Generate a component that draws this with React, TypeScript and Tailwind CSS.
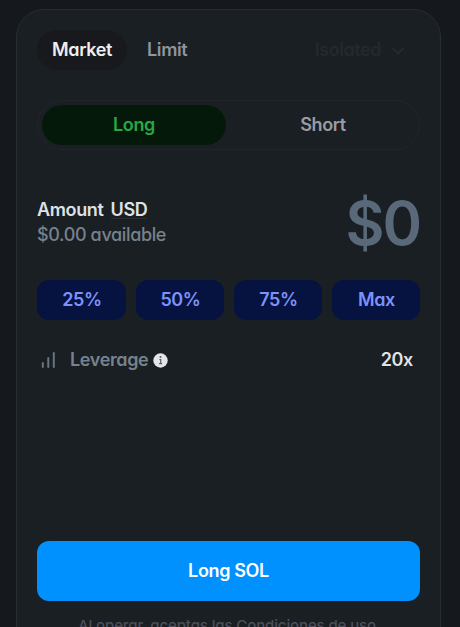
import { ReactNode } from "react";

function Percent({ children }: { children: ReactNode }) {
  return (
    <button className="h-10 rounded-xl bg-[#06123f] pl-px text-lg font-semibold tracking-[-0.36px] text-[#7c92fb]">
      {children}
    </button>
  );
}

export default function App() {
  return (
    <main className="h-[627px] w-[460px] overflow-hidden bg-[#15181c] pt-[9px] pl-4 font-['Inter',sans-serif] text-lg leading-6 font-semibold tracking-[-0.36px] [font-feature-settings:'cv11']">
      <section className="flex h-[660px] w-[425px] flex-col rounded-t-[28px] border border-[#292d33] bg-[#1a1f23] px-5 pt-5">
        <header className="flex h-10 items-center">
          <button className="h-10 w-[90px] rounded-full bg-[#18191c] text-[#eeeeee]">Market</button>
          <button className="ml-5 text-[#8f949f]">Limit</button>
          <button className="mr-[15px] ml-auto flex items-center gap-[10px] text-[#25282d]">
            <span className="tracking-[-0.45px]">Isolated</span>
            <svg width="14" height="14" viewBox="0 0 14 14" fill="none" stroke="currentColor" strokeWidth="2.3">
              <path d="m1.2 5 5.8 5.4L12.8 5" />
            </svg>
          </button>
        </header>

        <div className="mt-[30px] flex h-[50px] rounded-full border border-[#222428] p-1">
          <button className="w-[184px] rounded-full bg-[#05190b] text-[#27a844]">Long</button>
          <button className="flex-1 pl-[5px] text-[#9a9ca5]">Short</button>
        </div>

        <div className="mt-[42px] flex h-[64px] justify-between">
          <div className="pt-[5px] leading-[25px]">
            <div className="flex h-[25px] gap-[7px] text-[#dee2e6]">
              <span>Amount</span>
              <span className="h-[22px] border-b border-[#2b2f34]">USD</span>
            </div>
            <div className="font-medium text-[#77828e]">$0.00 available</div>
          </div>
          <div className="text-[60px] leading-[62px] font-semibold tracking-[-2px] text-[#5a6979]">$0</div>
        </div>

        <div className="mt-6 grid grid-cols-[89px_88px_88px_88px] gap-[10px]">
          <Percent>25%</Percent>
          <Percent>50%</Percent>
          <Percent>75%</Percent>
          <Percent>Max</Percent>
        </div>

        <div className="mt-7 flex h-6 items-center pr-[7px] pl-1">
          <svg width="16" height="18" viewBox="0 0 16 18" fill="none" stroke="#687480" strokeWidth="2" strokeLinecap="round">
            <path d="M1.8 12v4M7.3 7v9M12.8 2v14" />
          </svg>
          <span className="ml-[13px] text-[#77828e]">Leverage</span>
          <svg className="ml-[5px]" width="15" height="15" viewBox="0 0 15 15">
            <circle cx="7.5" cy="7.5" r="7.2" fill="#e4e5eb" />
            <path d="M6.4 6.5h1.3v4M6.1 10.6h3" fill="none" stroke="#555c66" strokeWidth="1.2" />
            <circle cx="7.5" cy="4.1" r="1" fill="#555c66" />
          </svg>
          <span className="ml-auto text-[#dfe2e6]">20x</span>
        </div>

        <button className="mt-[169px] h-[60px] shrink-0 rounded-xl bg-[#0091ff] text-white">Long SOL</button>
        <p className="mt-[15px] pr-[3px] text-center text-[15px] leading-5 font-medium tracking-[-0.12px] text-[#4c4e59]">
          Al operar, aceptas las Condiciones de uso
        </p>
      </section>
    </main>
  );
}
